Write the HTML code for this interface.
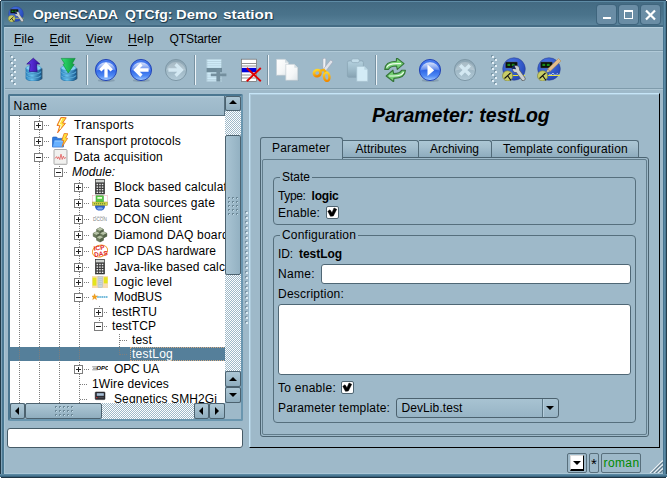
<!DOCTYPE html>
<html><head><meta charset="utf-8"><title>OpenSCADA QTCfg: Demo station</title>
<style>*{box-sizing:border-box;margin:0;padding:0}
html,body{width:667px;height:478px;overflow:hidden;background:#9eb9c9}
body{font-family:"Liberation Sans",sans-serif;font-size:12px;color:#000;position:relative;line-height:14px}
.a{position:absolute}
.t{position:absolute;white-space:nowrap;font-size:12px;line-height:14px;height:14px}
b{font-weight:bold}
#title{left:0;top:0;width:667px;height:27px;background:linear-gradient(#48718a 0,#446b83 10%,#4a738b 55%,#59829a 90%,#59829a 92%,#456c84 93%,#456c84 100%)}
#ttop{left:0;top:0;width:667px;height:1px;background:#27445a}
#fl{left:0;top:0;width:5px;height:478px;background:linear-gradient(90deg,#203846 0 1px,#7ea2b8 1px 2px,#4b7993 2px 4px,transparent 4px 5px)}
#fr{left:663px;top:0;width:4px;height:478px;background:linear-gradient(90deg,#477590 0 1px,#5c8aa4 1px 2px,#4b7993 2px 3px,#253f4e 3px 4px)}
#fb{left:0;top:474px;width:667px;height:4px;background:linear-gradient(#5a88a2 0 1px,#4b7993 1px 2px,#3a6580 2px 3px,#1f3544 3px 4px)}
.ttxt{top:6px;font-weight:bold;font-size:13.5px;line-height:18px;color:#fff;transform-origin:0 0;text-shadow:1px 1px 0 #24404f,0 1px 1px #24404f;white-space:nowrap}
.wb{border-radius:3px;background:#6a8da5;box-shadow:0 0 0 1px #3f657d}
#mline{left:4px;top:27px;width:659px;height:1px;background:#b4cddb}
#mb{left:4px;top:50px;width:659px;height:1px;background:#7f9bab}
#mb2{left:4px;top:51px;width:659px;height:1px;background:#b1cad8}
#tbb{left:4px;top:88px;width:659px;height:1px;background:#7f9bab}
#tbb2{left:4px;top:89px;width:659px;height:1px;background:#adc6d4}
.mi u{text-decoration:none;display:inline-block;height:14px;border-bottom:1px solid #000}
.sep{background:linear-gradient(90deg,#7892a2 0 1px,#eef4f8 1px 2px)}
#tree{left:8px;top:94px;width:235px;height:327px;background:#fff;border:2px solid #4b7791;border-right-color:#6a96af;border-bottom-color:#6a96af;border-radius:2px}
#thead{left:10px;top:96px;width:215px;height:20px;background:linear-gradient(#b3cddb 0,#a4bfcf 2px,#9ab6c7 100%);border-right:1px solid #56707f;border-bottom:1px solid #56707f}
.vl{background:repeating-linear-gradient(#7d7d7d 0 1px,transparent 1px 2px)}
.hl{background:repeating-linear-gradient(90deg,#7d7d7d 0 1px,transparent 1px 2px)}
.bx{border:1px solid #7d7d7d;background:#fff}
.bx:before{content:"";position:absolute;left:1px;top:3px;width:5px;height:1px;background:#222}
.bx.p:after{content:"";position:absolute;left:3px;top:1px;width:1px;height:5px;background:#222}
.sbtn{background:linear-gradient(#aec8d6,#8fadbe);border:1px solid #4c626f;border-radius:2px}
.chk{background:conic-gradient(#fff 25%,#9eb9c9 0 50%,#fff 0 75%,#9eb9c9 0) 0 0/2px 2px}
.tri{width:0;height:0;border-style:solid}
#rp{left:249px;top:93px;width:411px;height:355px;border-left:1px solid #c6e5f7;border-top:1px solid #c6e5f7;border-right:1px solid #000;border-bottom:1px solid #000;box-shadow:inset 1px 1px 0 #adcadb}
#big{left:372px;top:103px;font-weight:bold;font-style:italic;font-size:19.5px;line-height:24px;white-space:nowrap}
.tab{border:1px solid #526b79;border-bottom:none;border-left:none;background:linear-gradient(#acc7d5 0,#a3becd 40%,#8eacbe 100%);border-radius:0 3px 0 0}
#tab0{left:260px;top:137px;width:83px;height:22px;border:1px solid #526b79;border-bottom:none;border-radius:3px 3px 0 0;background:#9eb9c9}
#pane{left:260px;top:157px;width:389px;height:280px;border:1px solid #4c6472;border-radius:3px}
#pane2{left:262px;top:159px;width:385px;height:276px;border:1px solid #627d8c;border-radius:2px}
.gb{border:1px solid #566f7d;border-radius:4px}
.gbt{background:#9eb9c9;padding:0 2px}
.inp{background:#fff;border:1px solid #4f6775;border-radius:3px}
.cb{background:#fff;border:1px solid #4f6572;border-radius:2px}
.sf{border:1px solid #586f7c;border-radius:2px}

#fli{left:4px;top:27px;width:1px;height:447px;background:#aac6d5}
#fbi{left:4px;top:473px;width:659px;height:1px;background:#aac6d5}
#ttop2{left:1px;top:1px;width:665px;height:1px;background:#5e8ba5}
</style></head>
<body>
<svg width="0" height="0" style="position:absolute"><defs>
<linearGradient id="gBlue" x1="0" y1="0" x2="0" y2="1"><stop offset="0" stop-color="#4a7eee"/><stop offset=".5" stop-color="#2e65e6"/><stop offset=".78" stop-color="#4f8af4"/><stop offset="1" stop-color="#a4ccff"/></linearGradient>
<linearGradient id="gGloss" x1="0" y1="0" x2="0" y2="1"><stop offset="0" stop-color="#fff" stop-opacity=".8"/><stop offset="1" stop-color="#fff" stop-opacity=".18"/></linearGradient>
<linearGradient id="gGray" x1="0" y1="0" x2="0" y2="1"><stop offset="0" stop-color="#8aa3b1"/><stop offset="1" stop-color="#b3cbd8"/></linearGradient>
<linearGradient id="gCyl" x1="0" y1="0" x2="1" y2="0"><stop offset="0" stop-color="#2d86c4"/><stop offset=".4" stop-color="#6cc4ee"/><stop offset="1" stop-color="#15558c"/></linearGradient>
<linearGradient id="gPur" x1="0" y1="0" x2="1" y2="0"><stop offset="0" stop-color="#6a3cf0"/><stop offset="1" stop-color="#3310a0"/></linearGradient>
<linearGradient id="gGrn" x1="0" y1="0" x2="1" y2="0"><stop offset="0" stop-color="#2fe070"/><stop offset="1" stop-color="#0f9a3c"/></linearGradient>
<radialGradient id="gScada" cx=".4" cy=".3" r=".8"><stop offset="0" stop-color="#4a78e8"/><stop offset="1" stop-color="#1f3fb0"/></radialGradient>
<linearGradient id="gPage" x1="0" y1="0" x2="1" y2="1"><stop offset="0" stop-color="#ffffff"/><stop offset=".6" stop-color="#f4f6f7"/><stop offset="1" stop-color="#dfe6ea"/></linearGradient>
<linearGradient id="gYel" x1="0" y1="0" x2="0" y2="1"><stop offset="0" stop-color="#ffd62a"/><stop offset="1" stop-color="#f08a00"/></linearGradient>
<linearGradient id="gClip" x1="0" y1="0" x2="0" y2="1"><stop offset="0" stop-color="#b4d0de"/><stop offset=".5" stop-color="#9fbccb"/><stop offset="1" stop-color="#87a3b3"/></linearGradient>
</defs></svg>
<div id="title" class="a"></div>
<div id="mline" class="a"></div><div id="mb" class="a"></div><div id="mb2" class="a"></div><div id="tbb" class="a"></div><div id="tbb2" class="a"></div>
<svg class="a" style="left:8px;top:6px" width="16" height="16" viewBox="0 0 24 24"><circle cx="12" cy="12" r="11.3" fill="url(#gScada)" stroke="#2a3f8a" stroke-width=".5"/><rect x="3.6" y="5" width="11.8" height="6" rx=".8" fill="#0a0f0a" stroke="#555" stroke-width=".4"/><rect x="5.4" y="6.8" width="2.8" height="2.2" fill="#1a8a1a"/><rect x="9.8" y="6.8" width="2.8" height="2.2" fill="#1a8a1a"/><path d="M11 18.5 H23" stroke="#e8e43a" stroke-width="1"/><circle cx="5.6" cy="18.9" r="5.1" fill="#c9cd66" stroke="#7d8030" stroke-width=".6"/><path d="M2.5 21.5 L8.5 16 M5.5 18.5 L9 23.5" stroke="#111" stroke-width="1.1"/><path d="M15 13 L21.2 21.6" stroke="#5f6568" stroke-width="4.6" stroke-linecap="round"/><circle cx="14" cy="12" r="3.7" fill="#5f6568"/><path d="M15 13 L21.2 21.6" stroke="#cdd0d1" stroke-width="3.2" stroke-linecap="round"/><circle cx="14" cy="12" r="3.1" fill="#cdd0d1"/><path d="M14.2 12.2 L9.4 11.8 L11.8 7.6 Z" fill="#16245e"/></svg>
<div class="a ttxt" style="left:33px;transform:scaleX(1.03)">OpenSCADA</div>
<div class="a ttxt" style="left:124.5px;transform:scaleX(1.035)">QTCfg:</div>
<div class="a ttxt" style="left:176px;transform:scaleX(1.1)">Demo</div>
<div class="a ttxt" style="left:222.5px;transform:scaleX(1.137)">station</div>
<div class="a wb" style="left:597px;top:5px;width:19px;height:19px;"></div>
<div class="a wb" style="left:619px;top:5px;width:19px;height:19px;"></div>
<div class="a wb" style="left:641px;top:5px;width:19px;height:19px;"></div>
<div class="a " style="left:603px;top:17px;width:8px;height:2px;background:#fff"></div>
<div class="a " style="left:624px;top:10px;width:9px;height:9px;border:2px solid #fff;border-width:2px 1px 1px 1px;outline:0"></div>
<svg class="a" style="left:641px;top:5px" width="19" height="19" viewBox="0 0 19 19"><path d="M5 5.5 L14 14.5 M14 5.5 L5 14.5" stroke="#fff" stroke-width="2.2"/></svg>
<div class="t mi" style="left:14px;top:32px;letter-spacing:0.164px;"><u>F</u>ile</div>
<div class="t mi" style="left:49.5px;top:32px;letter-spacing:0.082px;"><u>E</u>dit</div>
<div class="t mi" style="left:86px;top:32px;letter-spacing:0.051px;"><u>V</u>iew</div>
<div class="t mi" style="left:128px;top:32px;letter-spacing:0.328px;"><u>H</u>elp</div>
<div class="t mi" style="left:169.5px;top:32px;letter-spacing:-0.073px;">QTStarter</div>
<div class="a " style="left:10px;top:55px;width:2px;height:2px;background:#7a96a6"></div>
<div class="a " style="left:11px;top:56px;width:2px;height:2px;background:#e3eff6"></div>
<div class="a " style="left:13px;top:58px;width:2px;height:2px;background:#7a96a6"></div>
<div class="a " style="left:14px;top:59px;width:2px;height:2px;background:#e3eff6"></div>
<div class="a " style="left:10px;top:61px;width:2px;height:2px;background:#7a96a6"></div>
<div class="a " style="left:11px;top:62px;width:2px;height:2px;background:#e3eff6"></div>
<div class="a " style="left:13px;top:64px;width:2px;height:2px;background:#7a96a6"></div>
<div class="a " style="left:14px;top:65px;width:2px;height:2px;background:#e3eff6"></div>
<div class="a " style="left:10px;top:67px;width:2px;height:2px;background:#7a96a6"></div>
<div class="a " style="left:11px;top:68px;width:2px;height:2px;background:#e3eff6"></div>
<div class="a " style="left:13px;top:70px;width:2px;height:2px;background:#7a96a6"></div>
<div class="a " style="left:14px;top:71px;width:2px;height:2px;background:#e3eff6"></div>
<div class="a " style="left:10px;top:73px;width:2px;height:2px;background:#7a96a6"></div>
<div class="a " style="left:11px;top:74px;width:2px;height:2px;background:#e3eff6"></div>
<div class="a " style="left:13px;top:76px;width:2px;height:2px;background:#7a96a6"></div>
<div class="a " style="left:14px;top:77px;width:2px;height:2px;background:#e3eff6"></div>
<div class="a " style="left:10px;top:79px;width:2px;height:2px;background:#7a96a6"></div>
<div class="a " style="left:11px;top:80px;width:2px;height:2px;background:#e3eff6"></div>
<div class="a " style="left:13px;top:82px;width:2px;height:2px;background:#7a96a6"></div>
<div class="a " style="left:14px;top:83px;width:2px;height:2px;background:#e3eff6"></div>
<div class="a " style="left:491px;top:55px;width:2px;height:2px;background:#7a96a6"></div>
<div class="a " style="left:492px;top:56px;width:2px;height:2px;background:#e3eff6"></div>
<div class="a " style="left:494px;top:58px;width:2px;height:2px;background:#7a96a6"></div>
<div class="a " style="left:495px;top:59px;width:2px;height:2px;background:#e3eff6"></div>
<div class="a " style="left:491px;top:61px;width:2px;height:2px;background:#7a96a6"></div>
<div class="a " style="left:492px;top:62px;width:2px;height:2px;background:#e3eff6"></div>
<div class="a " style="left:494px;top:64px;width:2px;height:2px;background:#7a96a6"></div>
<div class="a " style="left:495px;top:65px;width:2px;height:2px;background:#e3eff6"></div>
<div class="a " style="left:491px;top:67px;width:2px;height:2px;background:#7a96a6"></div>
<div class="a " style="left:492px;top:68px;width:2px;height:2px;background:#e3eff6"></div>
<div class="a " style="left:494px;top:70px;width:2px;height:2px;background:#7a96a6"></div>
<div class="a " style="left:495px;top:71px;width:2px;height:2px;background:#e3eff6"></div>
<div class="a " style="left:491px;top:73px;width:2px;height:2px;background:#7a96a6"></div>
<div class="a " style="left:492px;top:74px;width:2px;height:2px;background:#e3eff6"></div>
<div class="a " style="left:494px;top:76px;width:2px;height:2px;background:#7a96a6"></div>
<div class="a " style="left:495px;top:77px;width:2px;height:2px;background:#e3eff6"></div>
<div class="a " style="left:491px;top:79px;width:2px;height:2px;background:#7a96a6"></div>
<div class="a " style="left:492px;top:80px;width:2px;height:2px;background:#e3eff6"></div>
<div class="a " style="left:494px;top:82px;width:2px;height:2px;background:#7a96a6"></div>
<div class="a " style="left:495px;top:83px;width:2px;height:2px;background:#e3eff6"></div>
<div class="a sep" style="left:86px;top:55px;width:2px;height:30px;"></div>
<div class="a sep" style="left:194px;top:55px;width:2px;height:30px;"></div>
<div class="a sep" style="left:267px;top:55px;width:2px;height:30px;"></div>
<div class="a sep" style="left:375px;top:55px;width:2px;height:30px;"></div>
<svg class="a" style="left:21px;top:57px" width="24" height="24" viewBox="0 0 24 24"><path d="M6 21.5 a7.6 3 0 0 0 15.4 -1 v-9 l-1.4 0 v9z" fill="#0b2c48" opacity=".75"/><path d="M4.9 18.6 v2.6 a7.6 2.9 0 0 0 15.2 0 v-2.6z" fill="url(#gCyl)" stroke="#1d6aa2" stroke-width=".5"/><ellipse cx="12.5" cy="18.6" rx="7.6" ry="2.7" fill="#86d0f2" stroke="#3a8fc4" stroke-width=".5"/><path d="M4.9 14.8 v2.6 a7.6 2.9 0 0 0 15.2 0 v-2.6z" fill="url(#gCyl)" stroke="#1d6aa2" stroke-width=".5"/><ellipse cx="12.5" cy="14.8" rx="7.6" ry="2.7" fill="#86d0f2" stroke="#3a8fc4" stroke-width=".5"/><path d="M4.9 11 v2.6 a7.6 2.9 0 0 0 15.2 0 v-2.6z" fill="url(#gCyl)" stroke="#1d6aa2" stroke-width=".5"/><ellipse cx="12.5" cy="11" rx="7.6" ry="2.7" fill="#86d0f2" stroke="#3a8fc4" stroke-width=".5"/><path d="M12.3 1.2 L18.8 7 H15.4 L16.2 14.6 H8.4 L9.2 7 H5.8 Z" fill="url(#gPur)" stroke="#2a0c84" stroke-width=".7"/></svg>
<svg class="a" style="left:55.5px;top:57px" width="24" height="24" viewBox="0 0 24 24"><path d="M6 21.5 a7.6 3 0 0 0 15.4 -1 v-9 l-1.4 0 v9z" fill="#0b2c48" opacity=".75"/><path d="M4.9 18.6 v2.6 a7.6 2.9 0 0 0 15.2 0 v-2.6z" fill="url(#gCyl)" stroke="#1d6aa2" stroke-width=".5"/><ellipse cx="12.5" cy="18.6" rx="7.6" ry="2.7" fill="#86d0f2" stroke="#3a8fc4" stroke-width=".5"/><path d="M4.9 14.8 v2.6 a7.6 2.9 0 0 0 15.2 0 v-2.6z" fill="url(#gCyl)" stroke="#1d6aa2" stroke-width=".5"/><ellipse cx="12.5" cy="14.8" rx="7.6" ry="2.7" fill="#86d0f2" stroke="#3a8fc4" stroke-width=".5"/><path d="M4.9 11 v2.6 a7.6 2.9 0 0 0 15.2 0 v-2.6z" fill="url(#gCyl)" stroke="#1d6aa2" stroke-width=".5"/><ellipse cx="12.5" cy="11" rx="7.6" ry="2.7" fill="#86d0f2" stroke="#3a8fc4" stroke-width=".5"/><path d="M5.2 1.4 H19.2 L16.2 6.6 L18.2 7.4 L12.2 16 L7 7.4 L8.6 6.6 Z" fill="url(#gGrn)" stroke="#0c8a38" stroke-width=".6"/></svg>
<svg class="a" style="left:94.4px;top:58px" width="24" height="24" viewBox="0 0 24 24"><ellipse cx="12.3" cy="22.4" rx="8.5" ry="1.7" fill="#1a2f4a" opacity=".18"/><circle cx="12" cy="12" r="10.6" fill="url(#gBlue)" stroke="#2748b6" stroke-width="1"/><path d="M2.3 12.6 A9.8 9.8 0 0 1 21.7 12.6 Q12 10.2 2.3 12.6z" fill="url(#gGloss)"/><path d="M12 19.6 V8 M6.3 12.4 L12 6.6 L17.7 12.4" stroke="#fff" stroke-width="3.3" fill="none"/></svg>
<svg class="a" style="left:129px;top:58px" width="24" height="24" viewBox="0 0 24 24"><ellipse cx="12.3" cy="22.4" rx="8.5" ry="1.7" fill="#1a2f4a" opacity=".18"/><circle cx="12" cy="12" r="10.6" fill="url(#gBlue)" stroke="#2748b6" stroke-width="1"/><path d="M2.3 12.6 A9.8 9.8 0 0 1 21.7 12.6 Q12 10.2 2.3 12.6z" fill="url(#gGloss)"/><path d="M19.6 12 H8 M12.4 6.3 L6.6 12 L12.4 17.7" stroke="#fff" stroke-width="3.3" fill="none"/></svg>
<svg class="a" style="left:164px;top:58px" width="24" height="24" viewBox="0 0 24 24"><circle cx="12" cy="12" r="10.6" fill="url(#gGray)" stroke="#7e98a7" stroke-width="1"/><path d="M2.4 12.4 A9.7 9.7 0 0 1 21.6 12.4 Q12 10.2 2.4 12.4z" fill="#fff" opacity=".22"/><path d="M4.4 12 H16 M11.6 6.3 L17.4 12 L11.6 17.7" stroke="#d3e8f2" stroke-width="3.3" fill="none"/></svg>
<svg class="a" style="left:204.5px;top:58px" width="24" height="24" viewBox="0 0 24 24"><rect x="1.5" y="1.2" width="15.5" height="22.2" fill="#cfebf8"/><rect x="1.5" y="1.2" width="15.5" height=".7" fill="#b3cedb"/><rect x="1.5" y="3.3" width="15.5" height=".7" fill="#b3cedb"/><rect x="1.5" y="5.4" width="15.5" height=".7" fill="#b3cedb"/><rect x="1.5" y="7.5" width="15.5" height=".7" fill="#b3cedb"/><rect x="1.5" y="16.6" width="15.5" height=".7" fill="#b3cedb"/><rect x="1.5" y="18.8" width="15.5" height=".7" fill="#b3cedb"/><rect x="1.5" y="21" width="15.5" height=".7" fill="#b3cedb"/><rect x="1.5" y="22.6" width="15.5" height=".7" fill="#b3cedb"/><rect x="1.5" y="1.2" width=".7" height="22.2" fill="#9fbac8"/><rect x="16.3" y="1.2" width=".7" height="22.2" fill="#9fbac8"/><rect x="1.5" y="9.9" width="15.5" height="4.4" fill="#6f8b9a"/><path d="M11.4 10.7 h4 v4.8 h6 v2.7 h-6 v5.2 h-4 v-5.2 h-5.6 v-2.7 h5.6z" fill="#748f9e"/></svg>
<svg class="a" style="left:239.5px;top:58px" width="24" height="24" viewBox="0 0 24 24"><rect x="1.5" y="1.2" width="15" height="22.2" fill="#fff" stroke="#6e6e6e" stroke-width=".7"/><rect x="1.8" y="5.2" width="14.4" height=".8" fill="#777"/><rect x="1.8" y="7.6" width="14.4" height=".8" fill="#777"/><rect x="1.8" y="16.6" width="14.4" height=".8" fill="#777"/><rect x="1.8" y="19.6" width="14.4" height=".8" fill="#777"/><rect x="1.8" y="9.9" width="14.4" height="4.4" fill="#0000dd"/><path d="M6.8 10 L20.8 23.2 M20.8 10 L6.8 23.2" stroke="#e00000" stroke-width="1.9" fill="none"/></svg>
<svg class="a" style="left:275px;top:58px" width="24" height="24" viewBox="0 0 24 24"><g transform="translate(1.5,1.3)"><path d="M0 0 h8.5 l3.5 3.5 v12.5 h-12z" transform="translate(.7,.8)" fill="#6f8a99" opacity=".35"/><path d="M0 0 h8.5 l3.5 3.5 v12.5 h-12z" fill="url(#gPage)" stroke="#c4cfd5" stroke-width=".7"/><path d="M8.5 0 v3.5 h3.5z" fill="#d2dce1"/></g><g transform="translate(10.8,6.3)"><path d="M0 0 h8.5 l3.5 3.5 v12.5 h-12z" transform="translate(.7,.8)" fill="#6f8a99" opacity=".35"/><path d="M0 0 h8.5 l3.5 3.5 v12.5 h-12z" fill="url(#gPage)" stroke="#c4cfd5" stroke-width=".7"/><path d="M8.5 0 v3.5 h3.5z" fill="#d2dce1"/></g></svg>
<svg class="a" style="left:310.5px;top:58px" width="24" height="24" viewBox="0 0 24 24"><path d="M11.9 .8 Q13.3 -.4 14.9 .8 L14.4 11.6 L12 12.4 Z" fill="#eef1f5" stroke="#9a9fb0" stroke-width=".5"/><path d="M19.4 2.2 Q21.4 2 21.8 4 L14.6 13.2 L12.2 11.2 Z" fill="#dfe3ea" stroke="#9a9fb0" stroke-width=".5"/><ellipse cx="6.2" cy="15.1" rx="3.3" ry="3" transform="rotate(-20 6.2 15.1)" fill="none" stroke="url(#gYel)" stroke-width="2.7"/><ellipse cx="15.7" cy="18.7" rx="2.7" ry="4.3" transform="rotate(-8 15.7 18.7)" fill="none" stroke="url(#gYel)" stroke-width="2.4"/><path d="M9.4 12.6 L13 11.8 L14.6 14.2" stroke="#f4b010" stroke-width="2.4" fill="none" stroke-linejoin="round"/></svg>
<svg class="a" style="left:345.5px;top:58px" width="24" height="24" viewBox="0 0 24 24"><rect x="1.4" y="2.9" width="16" height="16.4" rx="1.6" fill="url(#gClip)" stroke="#86a2b1" stroke-width=".7"/><rect x="5.4" y=".8" width="8" height="3.8" rx="1.7" fill="#c2dce9" stroke="#8fabba" stroke-width=".7"/><path d="M10.7 8.3 h7.6 l3.5 3.5 v11.6 h-11.1z" fill="#d3ebf6" stroke="#a3bfcd" stroke-width=".7"/><path d="M18.3 8.3 v3.5 h3.5z" fill="#b9d5e2"/></svg>
<svg class="a" style="left:383px;top:58px" width="24" height="24" viewBox="0 0 24 24"><path d="M1.8 11.4 C2 6 6 3.4 13.3 3.2 L13.6 -.2 L21 5.6 L14.3 11.4 L13.6 8 C8.5 8 6.6 9 5.6 11.4 Z" fill="#74d074" stroke="#35743a" stroke-width="1.15" stroke-linejoin="round"/><path d="M22.4 12.2 C22.2 17.6 18.2 20.2 10.9 20.4 L10.6 23.8 L3.2 18 L9.9 12.2 L10.6 15.6 C15.7 15.6 17.6 14.6 18.6 12.2 Z" fill="#74d074" stroke="#35743a" stroke-width="1.15" stroke-linejoin="round"/><path d="M3.6 9.6 C4.6 6.8 7.6 5.6 13.6 5.6 H18 M20.6 14 C19.6 16.8 16.6 18 10.6 18 H6.2" stroke="#effcef" stroke-width="1.1" fill="none"/></svg>
<svg class="a" style="left:418px;top:58px" width="24" height="24" viewBox="0 0 24 24"><ellipse cx="12.3" cy="22.4" rx="8.5" ry="1.7" fill="#1a2f4a" opacity=".18"/><circle cx="12" cy="12" r="10.6" fill="url(#gBlue)" stroke="#2748b6" stroke-width="1"/><path d="M2.3 12.6 A9.8 9.8 0 0 1 21.7 12.6 Q12 10.2 2.3 12.6z" fill="url(#gGloss)"/><path d="M9.5 6.4 L16.2 12.2 L9.5 18 Z" fill="#fff"/></svg>
<svg class="a" style="left:453px;top:58px" width="24" height="24" viewBox="0 0 24 24"><circle cx="12" cy="12" r="10.6" fill="url(#gGray)" stroke="#7e98a7" stroke-width="1"/><path d="M2.4 12.4 A9.7 9.7 0 0 1 21.6 12.4 Q12 10.2 2.4 12.4z" fill="#fff" opacity=".22"/><path d="M7.2 7.2 L16.8 16.8 M16.8 7.2 L7.2 16.8" stroke="#d3e8f2" stroke-width="3.4" fill="none"/></svg>
<svg class="a" style="left:502px;top:57.3px" width="24" height="24" viewBox="0 0 24 24"><circle cx="12" cy="12" r="11.3" fill="url(#gScada)" stroke="#2a3f8a" stroke-width=".5"/><rect x="3.6" y="5" width="11.8" height="6" rx=".8" fill="#0a0f0a" stroke="#555" stroke-width=".4"/><rect x="5.4" y="6.8" width="2.8" height="2.2" fill="#1a8a1a"/><rect x="9.8" y="6.8" width="2.8" height="2.2" fill="#1a8a1a"/><path d="M11 18.5 H23" stroke="#e8e43a" stroke-width="1"/><circle cx="5.6" cy="18.9" r="5.1" fill="#c9cd66" stroke="#7d8030" stroke-width=".6"/><path d="M2.5 21.5 L8.5 16 M5.5 18.5 L9 23.5" stroke="#111" stroke-width="1.1"/><path d="M15 13 L21.2 21.6" stroke="#5f6568" stroke-width="4.6" stroke-linecap="round"/><circle cx="14" cy="12" r="3.7" fill="#5f6568"/><path d="M15 13 L21.2 21.6" stroke="#cdd0d1" stroke-width="3.2" stroke-linecap="round"/><circle cx="14" cy="12" r="3.1" fill="#cdd0d1"/><path d="M14.2 12.2 L9.4 11.8 L11.8 7.6 Z" fill="#16245e"/></svg>
<svg class="a" style="left:537px;top:57.3px" width="24" height="24" viewBox="0 0 24 24"><circle cx="12" cy="12" r="11.3" fill="url(#gScada)" stroke="#2a3f8a" stroke-width=".5"/><rect x="3.6" y="5" width="11.8" height="6" rx=".8" fill="#0a0f0a" stroke="#555" stroke-width=".4"/><rect x="5.4" y="6.8" width="2.8" height="2.2" fill="#1a8a1a"/><rect x="9.8" y="6.8" width="2.8" height="2.2" fill="#1a8a1a"/><path d="M11 18.5 H23" stroke="#e8e43a" stroke-width="1"/><circle cx="5.6" cy="18.9" r="5.1" fill="#c9cd66" stroke="#7d8030" stroke-width=".6"/><path d="M2.5 21.5 L8.5 16 M5.5 18.5 L9 23.5" stroke="#111" stroke-width="1.1"/><path d="M21.5 1.5 L24 4 L13 14.5 L10.6 12 Z" fill="#e2bd8e" stroke="#a88250" stroke-width=".5"/><path d="M10.6 12 L13 14.5 L9.3 15.6 Z" fill="#e8d9a0" stroke="#555" stroke-width=".4"/><path d="M12 17 l2 1 2-2 2 2.5 2-2 1.5 1" stroke="#cfd8e8" stroke-width=".8" fill="none"/></svg>
<div id="tree" class="a"></div>
<div class="a" style="left:10px;top:116px;width:215px;height:287px;overflow:hidden" id="tv">
<div class="a " style="left:0px;top:231px;width:215px;height:14px;background:#557f9a"></div>
<div class="a " style="left:120px;top:231px;width:100px;height:14px;border:1px dotted #d2ab85"></div>
<div class="a vl" style="left:9px;top:0px;width:1px;height:287px;background-position:0 0px"></div>
<div class="a vl" style="left:29px;top:0px;width:1px;height:287px;background-position:0 0px"></div>
<div class="a vl" style="left:49px;top:49px;width:1px;height:238px;background-position:0 1px"></div>
<div class="a vl" style="left:69px;top:63px;width:1px;height:224px;background-position:0 1px"></div>
<div class="a vl" style="left:89px;top:189px;width:1px;height:22px;background-position:0 1px"></div>
<div class="a vl" style="left:109px;top:217px;width:1px;height:22px;background-position:0 1px"></div>
<div class="a bx p" style="left:24px;top:5px;width:9px;height:9px;"></div>
<div class="a hl" style="left:34px;top:9px;width:6px;height:1px;background-position:0px 0"></div>
<svg class="a" style="left:42px;top:1px" width="16" height="16" viewBox="0 0 16 16"><path d="M9 .3 L14.2 .8 L10.6 6 L13.4 6.4 L5.6 15.8 L7.8 8.8 L5 8.4 Z" fill="#ffe23a" stroke="#e8641a" stroke-width=".9" stroke-linejoin="round"/><path d="M10 1.6 L7 7.4 L9.4 7.8 L8 12" stroke="#fffbd0" stroke-width="1" fill="none"/></svg>
<div class="t" style="left:64px;top:2px;letter-spacing:0.309px;">Transports</div>
<div class="a bx p" style="left:24px;top:21px;width:9px;height:9px;"></div>
<div class="a hl" style="left:34px;top:25px;width:6px;height:1px;background-position:0px 0"></div>
<svg class="a" style="left:42px;top:17px" width="16" height="16" viewBox="0 0 16 16"><path d="M.4 5.2 q0 -1.2 1.2 -1.2 h3 l1.3 1.4 h5.6 v8.4 h-11.1z" fill="#2f7be0" stroke="#1d57b0" stroke-width=".6"/><path d="M.5 14 L2.2 7.2 H12.4 L11.2 14Z" fill="#69b2ff" stroke="#2a6fd0" stroke-width=".5"/><path d="M2.6 8 H11.4" stroke="#b8dcff" stroke-width=".7"/><path d="M12.2 .4 L16 .8 L13.6 5 L15.6 5.4 L10.2 13.6 L11.8 7.6 L9.8 7.2 Z" fill="#ffe23a" stroke="#e8741a" stroke-width=".8" stroke-linejoin="round"/></svg>
<div class="t" style="left:64px;top:18px;letter-spacing:0.215px;">Transport protocols</div>
<div class="a bx" style="left:24px;top:37px;width:9px;height:9px;"></div>
<div class="a hl" style="left:34px;top:41px;width:6px;height:1px;background-position:0px 0"></div>
<svg class="a" style="left:42px;top:33px" width="16" height="16" viewBox="0 0 16 16"><rect x="2" y=".5" width="13" height="15" rx="1" fill="#f1f1ef" stroke="#a2a2a2" stroke-width=".9"/><path d="M3 9.5 L4.6 7.6 L5.6 9.8 L6.6 7.8 L7.8 10.6 L9 5.2 L10.2 10.4 L11.4 7.2 L12.4 9.6 L14 8.4" stroke="#e25858" stroke-width=".8" fill="none"/><path d="M2.5 15 H14.5 V1" stroke="#c9c9c9" stroke-width=".8" fill="none"/></svg>
<div class="t" style="left:64px;top:34px;letter-spacing:0.227px;">Data acquisition</div>
<div class="a bx" style="left:44px;top:52px;width:9px;height:9px;"></div>
<div class="a hl" style="left:54px;top:56px;width:4px;height:1px;background-position:0px 0"></div>
<div class="t" style="left:62px;top:49px;letter-spacing:0.045px;"><i>Module:</i></div>
<div class="a bx p" style="left:64px;top:67px;width:9px;height:9px;"></div>
<div class="a hl" style="left:74px;top:71px;width:6px;height:1px;background-position:0px 0"></div>
<svg class="a" style="left:82px;top:63px" width="16" height="16" viewBox="0 0 16 16"><rect x="3.4" y=".6" width="9.2" height="14.4" fill="#3c3c3c" stroke="#2a2a2a" stroke-width=".6"/><rect x="3.8" y="1" width="8.4" height="2.4" fill="#cfd3cf"/><rect x="4.6" y="4.8" width="1.5" height="1.4" fill="#ededed"/><rect x="7.199999999999999" y="4.8" width="1.5" height="1.4" fill="#ededed"/><rect x="9.8" y="4.8" width="1.5" height="1.4" fill="#ededed"/><rect x="4.6" y="7.4" width="1.5" height="1.4" fill="#ededed"/><rect x="7.199999999999999" y="7.4" width="1.5" height="1.4" fill="#ededed"/><rect x="9.8" y="7.4" width="1.5" height="1.4" fill="#ededed"/><rect x="4.6" y="10.0" width="1.5" height="1.4" fill="#ededed"/><rect x="7.199999999999999" y="10.0" width="1.5" height="1.4" fill="#ededed"/><rect x="9.8" y="10.0" width="1.5" height="1.4" fill="#ededed"/><rect x="4.6" y="12.600000000000001" width="1.5" height="1.4" fill="#ededed"/><rect x="7.199999999999999" y="12.600000000000001" width="1.5" height="1.4" fill="#ededed"/><rect x="9.8" y="12.600000000000001" width="1.5" height="1.4" fill="#ededed"/></svg>
<div class="t" style="left:104px;top:64px;letter-spacing:0.180px;">Block based calculator</div>
<div class="a bx p" style="left:64px;top:83px;width:9px;height:9px;"></div>
<div class="a hl" style="left:74px;top:87px;width:6px;height:1px;background-position:0px 0"></div>
<svg class="a" style="left:82px;top:79px" width="16" height="16" viewBox="0 0 16 16"><rect x=".6" y=".6" width="14.8" height="9.6" fill="#fff" stroke="#f0a8b8" stroke-width=".5"/><ellipse cx="8" cy="11.6" rx="5" ry="4" fill="#2f62c8"/><ellipse cx="8" cy="13.4" rx="3" ry="1.2" fill="#7fa6e8"/><rect x="4" y=".8" width="7.4" height="6.4" fill="#58c846" stroke="#2f8f2a" stroke-width=".5"/><rect x=".6" y="7" width="14.8" height="3.4" fill="#d6d84a" stroke="#8a8c20" stroke-width=".4"/><rect x="5.4" y="2" width="4.6" height="1.8" fill="#eaffd8"/><path d="M2 8.8 h12" stroke="#4a7a30" stroke-width="1" stroke-dasharray="1.2 .8"/></svg>
<div class="t" style="left:104px;top:80px;letter-spacing:0.214px;">Data sources gate</div>
<div class="a bx p" style="left:64px;top:99px;width:9px;height:9px;"></div>
<div class="a hl" style="left:74px;top:103px;width:6px;height:1px;background-position:0px 0"></div>
<svg class="a" style="left:82px;top:95px" width="16" height="16" viewBox="0 0 16 16"><path d="M3 5.6 h10" stroke="#a4a8aa" stroke-width=".6" stroke-dasharray="1 .6"/><text x="8" y="10.3" font-family="Liberation Sans" font-size="4.7" fill="#7c8082" text-anchor="middle">DCON</text></svg>
<div class="t" style="left:104px;top:96px;letter-spacing:0.119px;">DCON client</div>
<div class="a bx p" style="left:64px;top:115px;width:9px;height:9px;"></div>
<div class="a hl" style="left:74px;top:119px;width:6px;height:1px;background-position:0px 0"></div>
<svg class="a" style="left:82px;top:111px" width="16" height="16" viewBox="0 0 16 16"><path d="M8 0.6000000000000001 l3.4 1.7 v3 l-3.4 1.7 l-3.4 -1.7 v-3z" fill="#6c7c5c" stroke="#445238" stroke-width=".5"/><path d="M8 0.6000000000000001 l3.4 1.7 l-3.4 1.6 l-3.4 -1.6z" fill="#b6c2a6"/><path d="M8 3.9 v3.1 l3.4 -1.7 v-3z" fill="#55654a"/><path d="M4.6 4.6 l3.4 1.7 v3 l-3.4 1.7 l-3.4 -1.7 v-3z" fill="#6c7c5c" stroke="#445238" stroke-width=".5"/><path d="M4.6 4.6 l3.4 1.7 l-3.4 1.6 l-3.4 -1.6z" fill="#b6c2a6"/><path d="M4.6 7.8999999999999995 v3.1 l3.4 -1.7 v-3z" fill="#55654a"/><path d="M11.4 4.6 l3.4 1.7 v3 l-3.4 1.7 l-3.4 -1.7 v-3z" fill="#6c7c5c" stroke="#445238" stroke-width=".5"/><path d="M11.4 4.6 l3.4 1.7 l-3.4 1.6 l-3.4 -1.6z" fill="#b6c2a6"/><path d="M11.4 7.8999999999999995 v3.1 l3.4 -1.7 v-3z" fill="#55654a"/><path d="M8 8.6 l3.4 1.7 v3 l-3.4 1.7 l-3.4 -1.7 v-3z" fill="#6c7c5c" stroke="#445238" stroke-width=".5"/><path d="M8 8.6 l3.4 1.7 l-3.4 1.6 l-3.4 -1.6z" fill="#b6c2a6"/><path d="M8 11.9 v3.1 l3.4 -1.7 v-3z" fill="#55654a"/></svg>
<div class="t" style="left:104px;top:112px;letter-spacing:0.201px;">Diamond DAQ boards</div>
<div class="a bx p" style="left:64px;top:131px;width:9px;height:9px;"></div>
<div class="a hl" style="left:74px;top:135px;width:6px;height:1px;background-position:0px 0"></div>
<svg class="a" style="left:82px;top:127px" width="16" height="16" viewBox="0 0 16 16"><ellipse cx="8" cy="8" rx="7.8" ry="5.8" fill="none" stroke="#f0a030" stroke-width="1" transform="rotate(-18 8 8)"/><text x="7.5" y="7" font-family="Liberation Sans" font-size="6.4" font-weight="bold" fill="#e01818" text-anchor="middle" transform="rotate(-8 8 8)">ICP</text><text x="8.5" y="13.2" font-family="Liberation Sans" font-size="6.4" font-weight="bold" fill="#e01818" text-anchor="middle" transform="rotate(-8 8 8)">DAS</text></svg>
<div class="t" style="left:104px;top:128px;letter-spacing:0.054px;">ICP DAS hardware</div>
<div class="a bx p" style="left:64px;top:147px;width:9px;height:9px;"></div>
<div class="a hl" style="left:74px;top:151px;width:6px;height:1px;background-position:0px 0"></div>
<svg class="a" style="left:82px;top:143px" width="16" height="16" viewBox="0 0 16 16"><rect x="3.4" y=".6" width="9.2" height="14.4" fill="#3c3c3c" stroke="#2a2a2a" stroke-width=".6"/><rect x="3.8" y="1" width="8.4" height="2.4" fill="#cfd3cf"/><rect x="4.6" y="4.8" width="1.5" height="1.4" fill="#ededed"/><rect x="7.199999999999999" y="4.8" width="1.5" height="1.4" fill="#ededed"/><rect x="9.8" y="4.8" width="1.5" height="1.4" fill="#ededed"/><rect x="4.6" y="7.4" width="1.5" height="1.4" fill="#ededed"/><rect x="7.199999999999999" y="7.4" width="1.5" height="1.4" fill="#ededed"/><rect x="9.8" y="7.4" width="1.5" height="1.4" fill="#ededed"/><rect x="4.6" y="10.0" width="1.5" height="1.4" fill="#ededed"/><rect x="7.199999999999999" y="10.0" width="1.5" height="1.4" fill="#ededed"/><rect x="9.8" y="10.0" width="1.5" height="1.4" fill="#ededed"/><rect x="4.6" y="12.600000000000001" width="1.5" height="1.4" fill="#ededed"/><rect x="7.199999999999999" y="12.600000000000001" width="1.5" height="1.4" fill="#ededed"/><rect x="9.8" y="12.600000000000001" width="1.5" height="1.4" fill="#ededed"/></svg>
<div class="t" style="left:104px;top:144px;letter-spacing:0.151px;">Java-like based calculator</div>
<div class="a bx p" style="left:64px;top:162px;width:9px;height:9px;"></div>
<div class="a hl" style="left:74px;top:166px;width:6px;height:1px;background-position:0px 0"></div>
<svg class="a" style="left:82px;top:158px" width="16" height="16" viewBox="0 0 16 16"><rect x="0" y="2" width="16" height="12" fill="#f7dcb2"/><rect x=".6" y="3.6" width="3.8" height="8" fill="#e4e41c"/><rect x="11.8" y="3.2" width="3.8" height="6.2" fill="#e4e41c"/><rect x="6" y="2.6" width="4.6" height="11" fill="#c9d5d9" stroke="#aab6ba" stroke-width=".4"/><path d="M6.8 4.5 h3 M6.8 6.5 h3 M6.8 8.5 h3 M6.8 10.5 h3" stroke="#b4c0c4" stroke-width=".6"/></svg>
<div class="t" style="left:104px;top:159px;letter-spacing:0.118px;">Logic level</div>
<div class="a bx" style="left:64px;top:177px;width:9px;height:9px;"></div>
<div class="a hl" style="left:74px;top:181px;width:6px;height:1px;background-position:0px 0"></div>
<svg class="a" style="left:82px;top:173px" width="16" height="16" viewBox="0 0 16 16"><path d="M2.6 4.8 L3.4 6.9 L5.6 7 L3.9 8.4 L4.5 10.6 L2.6 9.3 L.7 10.6 L1.3 8.4 L-.4 7 L1.8 6.9 Z" fill="#f2a21e" stroke="#e08a10" stroke-width=".4"/><path d="M5.2 8 H16" stroke="#4aa6d0" stroke-width="1.7" stroke-dasharray="1.6 .5"/></svg>
<div class="t" style="left:104px;top:174px;letter-spacing:-0.003px;">ModBUS</div>
<div class="a bx p" style="left:84px;top:192px;width:9px;height:9px;"></div>
<div class="a hl" style="left:94px;top:196px;width:4px;height:1px;background-position:0px 0"></div>
<div class="t" style="left:102px;top:189px;letter-spacing:0.174px;">testRTU</div>
<div class="a bx" style="left:84px;top:206px;width:9px;height:9px;"></div>
<div class="a hl" style="left:94px;top:210px;width:4px;height:1px;background-position:0px 0"></div>
<div class="t" style="left:102px;top:203px;letter-spacing:0.096px;">testTCP</div>
<div class="a hl" style="left:110px;top:224px;width:8px;height:1px;background-position:0px 0"></div>
<div class="t" style="left:122px;top:217px;letter-spacing:0.168px;">test</div>
<div class="a hl" style="left:110px;top:238px;width:8px;height:1px;background-position:0px 0"></div>
<div class="t" style="left:122px;top:231px;letter-spacing:0.237px;color:#fff;">testLog</div>
<div class="a bx p" style="left:64px;top:249px;width:9px;height:9px;"></div>
<div class="a hl" style="left:74px;top:253px;width:6px;height:1px;background-position:0px 0"></div>
<svg class="a" style="left:82px;top:245px" width="16" height="16" viewBox="0 0 16 16"><path d="M.2 5.8 h5.6 M1 7.3 h4.6 M.2 8.8 h5.4" stroke="#7a7a7a" stroke-width=".8"/><text x="10.8" y="9.4" font-family="Liberation Sans" font-size="5.8" font-weight="bold" font-style="italic" fill="#000" text-anchor="middle">OPC</text></svg>
<div class="t" style="left:104px;top:246px;letter-spacing:-0.167px;">OPC UA</div>
<div class="a hl" style="left:70px;top:268px;width:8px;height:1px;background-position:0px 0"></div>
<div class="t" style="left:82px;top:261px;letter-spacing:0.126px;">1Wire devices</div>
<div class="a hl" style="left:70px;top:283px;width:8px;height:1px;background-position:0px 0"></div>
<svg class="a" style="left:82px;top:275px" width="16" height="16" viewBox="0 0 16 16"><rect x="3.2" y="1" width="9.8" height="7.6" rx=".8" fill="#2c2c32" stroke="#1c1c20" stroke-width=".5"/><rect x="4.8" y="2.2" width="7" height="2.6" fill="#a8c0d8"/><rect x="4.2" y="6" width="1.2" height="1.2" fill="#e03030"/><path d="M6.4 6.6 h5.4" stroke="#55555e" stroke-width=".8"/></svg>
<div class="t" style="left:104px;top:276px;letter-spacing:0.103px;">Segnetics SMH2Gi</div>
</div>
<div id="thead" class="a"></div>
<div class="t" style="left:13.5px;top:99px;letter-spacing:0.496px;">Name</div>
<div class="a chk" style="left:225px;top:116px;width:16px;height:287px;"></div>
<div class="a chk" style="left:225px;top:111px;width:16px;height:24px;"></div>
<div class="a " style="left:225px;top:96px;width:16px;height:15px;background:#86a3b4"></div>
<div class="a sbtn" style="left:225px;top:96px;width:16px;height:15px;"></div>
<div class="a tri" style="left:229px;top:100px;border-width:0 4px 4px 4px;border-color:transparent transparent #000 transparent"></div>
<div class="a sbtn" style="left:225px;top:135px;width:16px;height:140px;background:linear-gradient(90deg,#a9c4d3,#93b1c2)"></div>
<div class="a " style="left:228px;top:197px;width:2px;height:2px;background:#6d8998"></div>
<div class="a " style="left:229px;top:198px;width:1px;height:1px;background:#c6deea"></div>
<div class="a " style="left:232px;top:197px;width:2px;height:2px;background:#6d8998"></div>
<div class="a " style="left:233px;top:198px;width:1px;height:1px;background:#c6deea"></div>
<div class="a " style="left:236px;top:197px;width:2px;height:2px;background:#6d8998"></div>
<div class="a " style="left:237px;top:198px;width:1px;height:1px;background:#c6deea"></div>
<div class="a " style="left:228px;top:201px;width:2px;height:2px;background:#6d8998"></div>
<div class="a " style="left:229px;top:202px;width:1px;height:1px;background:#c6deea"></div>
<div class="a " style="left:232px;top:201px;width:2px;height:2px;background:#6d8998"></div>
<div class="a " style="left:233px;top:202px;width:1px;height:1px;background:#c6deea"></div>
<div class="a " style="left:236px;top:201px;width:2px;height:2px;background:#6d8998"></div>
<div class="a " style="left:237px;top:202px;width:1px;height:1px;background:#c6deea"></div>
<div class="a " style="left:228px;top:205px;width:2px;height:2px;background:#6d8998"></div>
<div class="a " style="left:229px;top:206px;width:1px;height:1px;background:#c6deea"></div>
<div class="a " style="left:232px;top:205px;width:2px;height:2px;background:#6d8998"></div>
<div class="a " style="left:233px;top:206px;width:1px;height:1px;background:#c6deea"></div>
<div class="a " style="left:236px;top:205px;width:2px;height:2px;background:#6d8998"></div>
<div class="a " style="left:237px;top:206px;width:1px;height:1px;background:#c6deea"></div>
<div class="a " style="left:228px;top:209px;width:2px;height:2px;background:#6d8998"></div>
<div class="a " style="left:229px;top:210px;width:1px;height:1px;background:#c6deea"></div>
<div class="a " style="left:232px;top:209px;width:2px;height:2px;background:#6d8998"></div>
<div class="a " style="left:233px;top:210px;width:1px;height:1px;background:#c6deea"></div>
<div class="a " style="left:236px;top:209px;width:2px;height:2px;background:#6d8998"></div>
<div class="a " style="left:237px;top:210px;width:1px;height:1px;background:#c6deea"></div>
<div class="a " style="left:228px;top:213px;width:2px;height:2px;background:#6d8998"></div>
<div class="a " style="left:229px;top:214px;width:1px;height:1px;background:#c6deea"></div>
<div class="a " style="left:232px;top:213px;width:2px;height:2px;background:#6d8998"></div>
<div class="a " style="left:233px;top:214px;width:1px;height:1px;background:#c6deea"></div>
<div class="a " style="left:236px;top:213px;width:2px;height:2px;background:#6d8998"></div>
<div class="a " style="left:237px;top:214px;width:1px;height:1px;background:#c6deea"></div>
<div class="a " style="left:225px;top:371px;width:16px;height:32px;background:#86a3b4"></div>
<div class="a sbtn" style="left:225px;top:371px;width:16px;height:16px;"></div>
<div class="a sbtn" style="left:225px;top:387px;width:16px;height:16px;"></div>
<div class="a tri" style="left:229px;top:377px;border-width:0 4px 4px 4px;border-color:transparent transparent #000 transparent"></div>
<div class="a tri" style="left:229px;top:393px;border-width:4px 4px 0 4px;border-color:#000 transparent transparent transparent"></div>
<div class="a chk" style="left:10px;top:403px;width:215px;height:16px;"></div>
<div class="a " style="left:225px;top:403px;width:16px;height:16px;background:#9eb9c9"></div>
<div class="a " style="left:10px;top:403px;width:15px;height:16px;background:#86a3b4"></div>
<div class="a " style="left:194px;top:403px;width:31px;height:16px;background:#86a3b4"></div>
<div class="a sbtn" style="left:10px;top:403px;width:15px;height:16px;"></div>
<div class="a sbtn" style="left:25px;top:403px;width:77px;height:16px;"></div>
<div class="a sbtn" style="left:194px;top:403px;width:15px;height:16px;"></div>
<div class="a sbtn" style="left:209px;top:403px;width:16px;height:16px;"></div>
<div class="a tri" style="left:15px;top:407px;border-width:4px 4px 4px 0;border-color:transparent #000 transparent transparent"></div>
<div class="a tri" style="left:199px;top:407px;border-width:4px 4px 4px 0;border-color:transparent #000 transparent transparent"></div>
<div class="a tri" style="left:215px;top:407px;border-width:4px 0 4px 4px;border-color:transparent transparent transparent #000"></div>
<div class="a " style="left:55px;top:406px;width:2px;height:2px;background:#6d8998"></div>
<div class="a " style="left:56px;top:407px;width:1px;height:1px;background:#c6deea"></div>
<div class="a " style="left:59px;top:406px;width:2px;height:2px;background:#6d8998"></div>
<div class="a " style="left:60px;top:407px;width:1px;height:1px;background:#c6deea"></div>
<div class="a " style="left:63px;top:406px;width:2px;height:2px;background:#6d8998"></div>
<div class="a " style="left:64px;top:407px;width:1px;height:1px;background:#c6deea"></div>
<div class="a " style="left:67px;top:406px;width:2px;height:2px;background:#6d8998"></div>
<div class="a " style="left:68px;top:407px;width:1px;height:1px;background:#c6deea"></div>
<div class="a " style="left:71px;top:406px;width:2px;height:2px;background:#6d8998"></div>
<div class="a " style="left:72px;top:407px;width:1px;height:1px;background:#c6deea"></div>
<div class="a " style="left:55px;top:410px;width:2px;height:2px;background:#6d8998"></div>
<div class="a " style="left:56px;top:411px;width:1px;height:1px;background:#c6deea"></div>
<div class="a " style="left:59px;top:410px;width:2px;height:2px;background:#6d8998"></div>
<div class="a " style="left:60px;top:411px;width:1px;height:1px;background:#c6deea"></div>
<div class="a " style="left:63px;top:410px;width:2px;height:2px;background:#6d8998"></div>
<div class="a " style="left:64px;top:411px;width:1px;height:1px;background:#c6deea"></div>
<div class="a " style="left:67px;top:410px;width:2px;height:2px;background:#6d8998"></div>
<div class="a " style="left:68px;top:411px;width:1px;height:1px;background:#c6deea"></div>
<div class="a " style="left:71px;top:410px;width:2px;height:2px;background:#6d8998"></div>
<div class="a " style="left:72px;top:411px;width:1px;height:1px;background:#c6deea"></div>
<div class="a " style="left:55px;top:414px;width:2px;height:2px;background:#6d8998"></div>
<div class="a " style="left:56px;top:415px;width:1px;height:1px;background:#c6deea"></div>
<div class="a " style="left:59px;top:414px;width:2px;height:2px;background:#6d8998"></div>
<div class="a " style="left:60px;top:415px;width:1px;height:1px;background:#c6deea"></div>
<div class="a " style="left:63px;top:414px;width:2px;height:2px;background:#6d8998"></div>
<div class="a " style="left:64px;top:415px;width:1px;height:1px;background:#c6deea"></div>
<div class="a " style="left:67px;top:414px;width:2px;height:2px;background:#6d8998"></div>
<div class="a " style="left:68px;top:415px;width:1px;height:1px;background:#c6deea"></div>
<div class="a " style="left:71px;top:414px;width:2px;height:2px;background:#6d8998"></div>
<div class="a " style="left:72px;top:415px;width:1px;height:1px;background:#c6deea"></div>
<div class="a inp" style="left:7px;top:428px;width:236px;height:20px;border-color:#465b67"></div>
<div class="a " style="left:245px;top:211px;width:2px;height:2px;background:#7893a3"></div>
<div class="a " style="left:246px;top:212px;width:2px;height:2px;background:#dcebf3"></div>
<div class="a " style="left:245px;top:216px;width:2px;height:2px;background:#7893a3"></div>
<div class="a " style="left:246px;top:217px;width:2px;height:2px;background:#dcebf3"></div>
<div class="a " style="left:245px;top:221px;width:2px;height:2px;background:#7893a3"></div>
<div class="a " style="left:246px;top:222px;width:2px;height:2px;background:#dcebf3"></div>
<div class="a " style="left:245px;top:226px;width:2px;height:2px;background:#7893a3"></div>
<div class="a " style="left:246px;top:227px;width:2px;height:2px;background:#dcebf3"></div>
<div class="a " style="left:245px;top:231px;width:2px;height:2px;background:#7893a3"></div>
<div class="a " style="left:246px;top:232px;width:2px;height:2px;background:#dcebf3"></div>
<div class="a " style="left:245px;top:236px;width:2px;height:2px;background:#7893a3"></div>
<div class="a " style="left:246px;top:237px;width:2px;height:2px;background:#dcebf3"></div>
<div class="a " style="left:245px;top:241px;width:2px;height:2px;background:#7893a3"></div>
<div class="a " style="left:246px;top:242px;width:2px;height:2px;background:#dcebf3"></div>
<div class="a " style="left:245px;top:246px;width:2px;height:2px;background:#7893a3"></div>
<div class="a " style="left:246px;top:247px;width:2px;height:2px;background:#dcebf3"></div>
<div class="a " style="left:245px;top:251px;width:2px;height:2px;background:#7893a3"></div>
<div class="a " style="left:246px;top:252px;width:2px;height:2px;background:#dcebf3"></div>
<div class="a " style="left:245px;top:256px;width:2px;height:2px;background:#7893a3"></div>
<div class="a " style="left:246px;top:257px;width:2px;height:2px;background:#dcebf3"></div>
<div class="a " style="left:245px;top:261px;width:2px;height:2px;background:#7893a3"></div>
<div class="a " style="left:246px;top:262px;width:2px;height:2px;background:#dcebf3"></div>
<div class="a " style="left:245px;top:266px;width:2px;height:2px;background:#7893a3"></div>
<div class="a " style="left:246px;top:267px;width:2px;height:2px;background:#dcebf3"></div>
<div class="a " style="left:245px;top:271px;width:2px;height:2px;background:#7893a3"></div>
<div class="a " style="left:246px;top:272px;width:2px;height:2px;background:#dcebf3"></div>
<div class="a " style="left:245px;top:276px;width:2px;height:2px;background:#7893a3"></div>
<div class="a " style="left:246px;top:277px;width:2px;height:2px;background:#dcebf3"></div>
<div class="a " style="left:245px;top:281px;width:2px;height:2px;background:#7893a3"></div>
<div class="a " style="left:246px;top:282px;width:2px;height:2px;background:#dcebf3"></div>
<div class="a " style="left:245px;top:286px;width:2px;height:2px;background:#7893a3"></div>
<div class="a " style="left:246px;top:287px;width:2px;height:2px;background:#dcebf3"></div>
<div class="a " style="left:245px;top:291px;width:2px;height:2px;background:#7893a3"></div>
<div class="a " style="left:246px;top:292px;width:2px;height:2px;background:#dcebf3"></div>
<div class="a " style="left:245px;top:296px;width:2px;height:2px;background:#7893a3"></div>
<div class="a " style="left:246px;top:297px;width:2px;height:2px;background:#dcebf3"></div>
<div class="a " style="left:245px;top:301px;width:2px;height:2px;background:#7893a3"></div>
<div class="a " style="left:246px;top:302px;width:2px;height:2px;background:#dcebf3"></div>
<div class="a " style="left:245px;top:306px;width:2px;height:2px;background:#7893a3"></div>
<div class="a " style="left:246px;top:307px;width:2px;height:2px;background:#dcebf3"></div>
<div class="a " style="left:245px;top:311px;width:2px;height:2px;background:#7893a3"></div>
<div class="a " style="left:246px;top:312px;width:2px;height:2px;background:#dcebf3"></div>
<div class="a " style="left:245px;top:316px;width:2px;height:2px;background:#7893a3"></div>
<div class="a " style="left:246px;top:317px;width:2px;height:2px;background:#dcebf3"></div>
<div class="a " style="left:245px;top:321px;width:2px;height:2px;background:#7893a3"></div>
<div class="a " style="left:246px;top:322px;width:2px;height:2px;background:#dcebf3"></div>
<div id="rp" class="a"></div>
<div id="big" class="a">Parameter: testLog</div>
<div id="pane" class="a"></div>
<div class="a tab" style="left:343px;top:140px;width:76px;height:17px;"></div>
<div class="a tab" style="left:419px;top:140px;width:73px;height:17px;"></div>
<div class="a tab" style="left:492px;top:140px;width:147px;height:17px;"></div>
<div id="tab0" class="a"></div>
<div id="pane2" class="a"></div>
<div class="t" style="left:272px;top:141px;letter-spacing:0.220px;">Parameter</div>
<div class="t" style="left:355.5px;top:142px;letter-spacing:0.033px;">Attributes</div>
<div class="t" style="left:430px;top:142px;letter-spacing:-0.040px;">Archiving</div>
<div class="t" style="left:503px;top:142px;letter-spacing:0.239px;letter-spacing:.19px">Template configuration</div>
<div class="a gb" style="left:273px;top:177px;width:363px;height:48px;"></div>
<div class="t gbt" style="left:280px;top:170px;letter-spacing:0.000px;">State</div>
<div class="a gb" style="left:273px;top:235px;width:363px;height:188px;"></div>
<div class="t gbt" style="left:280px;top:228px;letter-spacing:0.202px;">Configuration</div>
<div class="t" style="left:278px;top:189px;letter-spacing:-0.069px;letter-spacing:-.35px">Type:</div>
<div class="t" style="left:311.5px;top:189px;letter-spacing:-0.197px;"><b>logic</b></div>
<div class="t" style="left:278px;top:206px;letter-spacing:0.188px;">Enable:</div>
<div class="a cb" style="left:326px;top:206px;width:13px;height:13px;"></div>
<div class="t" style="left:278px;top:247px;letter-spacing:-0.109px;">ID:</div>
<div class="t" style="left:299px;top:247px;letter-spacing:-0.047px;"><b>testLog</b></div>
<div class="t" style="left:278px;top:267px;letter-spacing:0.331px;">Name:</div>
<div class="a inp" style="left:321px;top:264px;width:310px;height:20px;"></div>
<div class="t" style="left:278px;top:287px;letter-spacing:0.220px;">Description:</div>
<div class="a inp" style="left:278px;top:304px;width:353px;height:71px;"></div>
<div class="t" style="left:278px;top:381px;letter-spacing:0.263px;">To enable:</div>
<div class="a cb" style="left:341px;top:381px;width:13px;height:13px;"></div>
<div class="t" style="left:278px;top:401px;letter-spacing:0.174px;">Parameter template:</div>
<div class="a " style="left:396px;top:398px;width:163px;height:20px;border:1px solid #4c626f;border-radius:3px;background:linear-gradient(#a8c3d2,#97b4c5)"></div>
<div class="a " style="left:542px;top:399px;width:1px;height:18px;background:#5d7887"></div>
<div class="a " style="left:543px;top:399px;width:1px;height:18px;background:#b4cddb"></div>
<div class="t" style="left:401.5px;top:401px;letter-spacing:0.089px;">DevLib.test</div>
<div class="a tri" style="left:546px;top:406px;border-width:4px 4px 0 4px;border-color:#000 transparent transparent transparent"></div>
<svg class="a" style="left:326px;top:206px" width="13" height="13" viewBox="0 0 13 13"><path d="M1.8 5.3 L4 3.8 L6 6.8 L8 2 L10.7 3.3 L7.3 10 L4.5 10.3 Z" fill="#000" stroke="#000" stroke-width=".5" stroke-linejoin="round"/></svg>
<svg class="a" style="left:341px;top:381px" width="13" height="13" viewBox="0 0 13 13"><path d="M1.8 5.3 L4 3.8 L6 6.8 L8 2 L10.7 3.3 L7.3 10 L4.5 10.3 Z" fill="#000" stroke="#000" stroke-width=".5" stroke-linejoin="round"/></svg>
<div class="a sf" style="left:567px;top:453px;width:20px;height:20px;"></div>
<div class="a " style="left:570px;top:455px;width:14px;height:16px;background:#fff;border-right:1px solid #000;border-bottom:2px solid #000;border-left:1px solid #ddd;border-top:1px solid #ddd"></div>
<div class="a tri" style="left:573px;top:461px;border-width:4px 4px 0 4px;border-color:#000 transparent transparent transparent"></div>
<div class="a sf" style="left:589px;top:453px;width:10px;height:20px;"></div>
<div class="t" style="left:591px;top:457px;font-size:15px">*</div>
<div class="a sf" style="left:601px;top:453px;width:40px;height:20px;"></div>
<div class="t" style="left:603.5px;top:456px;letter-spacing:0.397px;color:#008a00">roman</div>
<svg class="a" style="left:649px;top:460px" width="14" height="14" viewBox="0 0 14 14"><path d="M0.5 14 L14 0.5" stroke="#f6fafc" stroke-width="1.3"/><path d="M1.9 14 L14 1.9" stroke="#5f7a8a" stroke-width="1.1"/><path d="M4.5 14 L14 4.5" stroke="#f6fafc" stroke-width="1.3"/><path d="M5.9 14 L14 5.9" stroke="#5f7a8a" stroke-width="1.1"/><path d="M8.5 14 L14 8.5" stroke="#f6fafc" stroke-width="1.3"/><path d="M9.9 14 L14 9.9" stroke="#5f7a8a" stroke-width="1.1"/></svg>
<div id="fli" class="a"></div><div id="fbi" class="a"></div>
<div id="fl" class="a"></div><div id="fr" class="a"></div><div id="fb" class="a"></div><div id="ttop2" class="a"></div><div id="ttop" class="a"></div>
<div class="a " style="left:0px;top:0px;width:1px;height:1px;background:#fff"></div>
<div class="a " style="left:666px;top:0px;width:1px;height:1px;background:#fff"></div>
<div class="a " style="left:666px;top:477px;width:1px;height:1px;background:#fff"></div>
<div class="a " style="left:0px;top:477px;width:1px;height:1px;background:#fff"></div>
</body></html>
